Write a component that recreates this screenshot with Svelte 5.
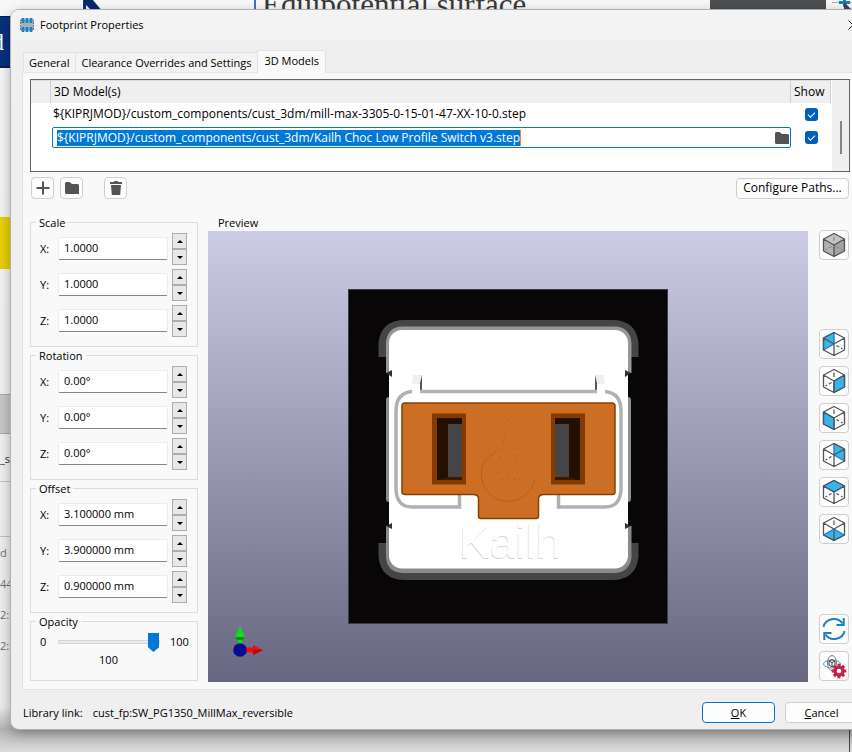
<script>
  const groups = [
    { name: 'Scale', values: ['1.0000', '1.0000', '1.0000'] },
    { name: 'Rotation', values: ['0.00°', '0.00°', '0.00°'] },
    { name: 'Offset', values: ['3.100000 mm', '3.900000 mm', '0.900000 mm'] }
  ];
  const axes = ['X', 'Y', 'Z'];

  const dashTop = 'M15 6.5v4.5';
  const dashLeft = 'M12.5 16.5l-2.5 1.5M8 19l-1.5 1';
  const dashRight = 'M17.5 16.5l2.5 1.5M22 19l1.5 1';
  const views = [
    { label: 'View left', face: '15,3.5 15,15 4.5,21 4.5,9', dashes: dashRight },
    { label: 'View right', face: '15,15 25.5,9 25.5,21 15,26.5', dashes: dashTop + dashLeft },
    { label: 'View front', face: '4.5,9 15,15 15,26.5 4.5,21', dashes: dashTop + dashRight },
    { label: 'View back', face: '15,3.5 25.5,9 25.5,21 15,15', dashes: dashLeft },
    { label: 'View top', face: '15,3.5 25.5,9 15,15 4.5,9', dashes: dashLeft + dashRight },
    { label: 'View bottom', face: '4.5,21 15,15 25.5,21 15,26.5', dashes: dashTop }
  ];
  const teeth = [0, 45, 90, 135, 180, 225, 270, 315];
  let opacity = $state(100);
</script>

{#snippet folder()}
  <svg class="folder" viewBox="0 0 14 12" aria-hidden="true">
    <path d="M0 1.5Q0 0 1.5 0H4.5L7 2H12.5Q14 2 14 3.5V12H1.5Q0 12 0 10.5Z" fill="#545454" />
  </svg>
{/snippet}

{#snippet cube(face, dashes, solid)}
  <svg viewBox="0 0 30 30" width="30" height="30" aria-hidden="true">
    {#if solid}
      <path d="M15 3.5L25.5 9L15 15L4.5 9Z" fill="#c6c6c6" />
      <path d="M4.5 9L15 15V26.5L4.5 21Z" fill="#b2b2b2" />
      <path d="M25.5 9L15 15V26.5L25.5 21Z" fill="#a2a2a2" />
    {:else}
      <polygon points={face} fill="#39b4ea" />
      <polygon points={face} fill="none" stroke="#1a81c4" stroke-width="1.4" stroke-linejoin="round" />
    {/if}
    <path d={dashes} fill="none" stroke={solid ? '#8c8c8c' : '#545454'} stroke-width="1.2" />
    <path d="M15 3.5L25.5 9V21L15 26.5L4.5 21V9ZM4.5 9L15 15L25.5 9M15 15V26.5" fill="none" stroke="#545454" stroke-width="1.3" stroke-linejoin="round" />
  </svg>
{/snippet}

<div class="screen">
  <div class="backdrop">
    <div class="navy"><span>d</span></div>
    <svg class="fin" viewBox="0 0 24 12"><path d="M0 0H10L20 12H17L3 0V12H0Z" fill="#0b3a86" /><path d="M1 0H9L19 12H1Z" fill="#07286c" /><path d="M3 5L10 12H3Z" fill="#f5f5f5" /></svg>
    <div class="rule"></div>
    <div class="heading">Equipotential surface</div>
    <div class="slate"></div>
    <svg class="cross" viewBox="0 0 20 10"><path d="M0 2.5H20" stroke="#b5b5b5" /><path d="M7 2.5H18M12.500 0V7" stroke="#1a81c4" stroke-width="3" /><path d="M12 2L20 10H12Z" fill="#444" /></svg>
    <div class="yellow"></div>
    <div class="grey"></div>
    <div class="list">
      <span class="dark">_sp</span><span class="blank"></span><span>d</span><span>44</span><span>2:1</span><span>2:2</span>
    </div>
    <div class="edge"></div>
  </div>

  <main class="dialog">
    <header class="titlebar">
      <svg viewBox="0 0 14 14" width="14" height="14" aria-hidden="true">
        <rect x="0.500" y="2" width="13" height="10" fill="#a9b2b8" stroke="#777" stroke-dasharray="2 1" />
        <path d="M3 0V5M7 0V5M11 0V5M3 9V14M7 9V14M11 9V14" stroke="#1a81c4" stroke-width="2.800" />
      </svg>
      <h1>Footprint Properties</h1>
      <button class="close" aria-label="Close"><svg viewBox="0 0 10 10" width="10" height="10"><path d="M.5 .5L9.500 9.500M9.500 .5L.5 9.500" stroke="#222" /></svg></button>
    </header>

    <div class="body">
      <div class="tabs" role="tablist">
        <button role="tab" aria-selected="false">General</button>
        <button role="tab" aria-selected="false">Clearance Overrides and Settings</button>
        <button role="tab" aria-selected="true" class="active">3D Models</button>
      </div>

      <section class="page">
        <div class="grid">
          <table>
            <thead>
              <tr><th class="num"></th><th>3D Model(s)</th><th class="show">Show</th></tr>
            </thead>
            <tbody>
              <tr>
                <td></td>
                <td class="path">{'${KIPRJMOD}/custom_components/cust_3dm/mill-max-3305-0-15-01-47-XX-10-0.step'}</td>
                <td class="tick"><input type="checkbox" checked aria-label="Show mill-max model" /></td>
              </tr>
              <tr>
                <td></td>
                <td class="edit">
                  <div class="editor">
                    <input type="text" aria-label="3D model path" value={'${KIPRJMOD}/custom_components/cust_3dm/Kailh Choc Low Profile Switch v3.step'} />
                    <button aria-label="Browse">{@render folder()}</button>
                  </div>
                </td>
                <td class="tick"><input type="checkbox" checked aria-label="Show Kailh model" /></td>
              </tr>
            </tbody>
          </table>
          <div class="scroll"><i></i></div>
        </div>

        <div class="tools">
          <button class="btn small" aria-label="Add"><svg viewBox="0 0 14 14" width="14" height="14"><path d="M7 0.500V13.500M0.500 7H13.500" stroke="#545454" stroke-width="2" /></svg></button>
          <button class="btn small" aria-label="Browse folder">{@render folder()}</button>
          <button class="btn small trash" aria-label="Delete"><svg viewBox="0 0 12 14" width="12" height="14"><path d="M0 1H3.500L4.500 0H7.500L8.500 1H12V3H0ZM1 4H11L10.200 14H1.800Z" fill="#545454" /></svg></button>
          <button class="btn configure">Configure Paths...</button>
        </div>

        <div class="columns">
          <div class="settings">
            {#each groups as g}
              <fieldset>
                <legend>{g.name}</legend>
                {#each axes as axis, i}
                  <div class="row">
                    <label for="{g.name}-{axis}">{axis}:</label>
                    <input id="{g.name}-{axis}" type="text" value={g.values[i]} />
                    <div class="spin">
                      <button aria-label="Increase {g.name} {axis}"><i class="up"></i></button>
                      <button aria-label="Decrease {g.name} {axis}"><i class="down"></i></button>
                    </div>
                  </div>
                {/each}
              </fieldset>
            {/each}
            <fieldset class="opacity">
              <legend>Opacity</legend>
              <div class="slide">
                <span class="min">0</span>
                <input type="range" min="0" max="100" bind:value={opacity} aria-label="Opacity" />
                <span class="max">100</span>
              </div>
              <output>{opacity}</output>
            </fieldset>
          </div>

          <div class="preview">
            <div class="caption">Preview</div>
            <div class="canvas">
              <svg viewBox="208 231 600 451" preserveAspectRatio="xMidYMid meet" role="img" aria-label="3D preview of the switch">
                <rect x="348.500" y="289.500" width="319" height="334" fill="#080606" stroke="#3c3a48" />
                <path d="M378.500 357V343Q381 320 405 320H612Q636 320 638.500 343V357Z" fill="#454545" />
                <path d="M378.500 543V557Q381 580 405 580H612Q636 580 638.500 557V543Z" fill="#454545" />
                <path d="M386 373V343Q387 327 402 326.500H615Q630 327 631.500 343V373Z" fill="#979797" />
                <path d="M386 526V557Q387 572 402 573H615Q630 572 631.500 557V526Z" fill="#8a8a8a" />
                <rect x="386" y="397" width="245" height="105" rx="3" fill="#8c8c8c" />
                <rect x="389" y="330" width="239" height="238.500" rx="13" fill="#fff" />
                <path d="M386 373L392 370V377ZM631 373L625 370V377ZM386 526L392 523V529ZM631 526L625 523V529Z" fill="#333" />
                <path d="M413 375H422L420 384H412ZM595 375H604L605 384H597Z" fill="#efefef" />
                <path d="M422 375V393H420V383ZM595 375V393H597V383Z" fill="#555" />
                <path d="M420 391.500H597" stroke="#b4b4b4" stroke-width="3.500" />
                <path d="M412 391.500Q396 393 396 411V490Q397 507 412 507H459.500V495M605 391.500Q621 393 621 411V490Q620 507 605 507H558.500V495" fill="none" stroke="#b0b0b0" stroke-width="3.500" />
                <path d="M405 403H612Q615 403 615 406V492Q615 494.500 612 494.500H544Q538.500 494.500 538.500 499V516Q538.500 518.500 536 518.500H481Q478.500 518.500 478.500 516V499Q478.500 494.500 473 494.500H405Q402 494.500 402 492V406Q402 403 405 403Z" fill="#cc6f25" stroke="#8a3e00" stroke-width="1.500" />
                <path d="M432 413.500H466V484.500H432ZM551 413.500H585V484.500H551Z" fill="#853b00" />
                <path d="M437 418H462V480H437ZM555 418H580V480H555Z" fill="#241000" />
                <path d="M448 424H462V477H448ZM555 424H569V477H555Z" fill="#454545" />
                <path d="M448 477H462V480H437ZM555 477H569L580 480H555Z" fill="#3c1900" />
                <g fill="none" stroke="#a65514" stroke-width=".6">
                  <path d="M497 451Q479 460 481.500 478Q486 500 509 501.500Q530 499 535 480" />
                  <path d="M507 421L510 419L513 436M505 433L497 477M514 447L520 482M494 484L509 475L523 485M529 459Q534 461 531 466" stroke-dasharray="2 6" />
                </g>
                <text x="458.500" y="558.500" class="brand" fill="#d4d4d4">Kailh</text>
                <text x="459" y="558" class="brand" fill="#fff">Kailh</text>
                <path d="M238 646V637H235L240 626L245 637H242V646Z" fill="#0de01b" />
                <path d="M235 637H245L243 640H237Z" fill="#07940d" />
                <path d="M246 647.500H253V645L263 650L253 655V652.500H246Z" fill="#f20d0d" />
                <path d="M253 655V650H263Z" fill="#b30909" />
                <circle cx="240" cy="650" r="6.800" fill="#0a0a94" />
              </svg>
            </div>
          </div>

          <div class="views">
            <button class="btn view first" aria-label="Isometric">{@render cube('', dashTop + dashLeft + dashRight, true)}</button>
            {#each views as v}
              <button class="btn view" aria-label={v.label}>{@render cube(v.face, v.dashes, false)}</button>
            {/each}
            <button class="btn view refresh" aria-label="Reload">
              <svg viewBox="0 0 30 30" width="30" height="30"><g fill="none" stroke="#1a81c4" stroke-width="2"><path d="M4.500 13C6 5 18 1.500 23.500 9.500M25.500 17C24 25 12 28.500 6.500 20.500" /><path d="M24.700 4V11H17.500M5.300 26V19H12.500" /></g></svg>
            </button>
            <button class="btn view" aria-label="3D settings">
              <svg viewBox="0 0 30 30" width="30" height="30">
                <g fill="none" stroke="#777" stroke-width="1"><ellipse cx="13" cy="13" rx="8.500" ry="4" stroke="#4aa3dc" /><ellipse cx="13" cy="12" rx="4.500" ry="7.500" /><path d="M10 10L13 8.500L16 10V14L13 16L10 14ZM10 10L13 11.500L16 10M13 11.500V16" stroke="#444" /></g>
                <g transform="translate(20 20)" fill="#c4224a">
                  <circle r="5.500" />
                  {#each teeth as t}<rect x="-1.500" y="-7.300" width="3" height="4" transform="rotate({t})" />{/each}
                  <circle r="2.300" fill="#fff" />
                </g>
              </svg>
            </button>
          </div>
        </div>
      </section>

      <footer>
        <span>Library link:</span>
        <span class="link">cust_fp:SW_PG1350_MillMax_reversible</span>
        <button class="btn ok"><span><u>O</u>K</span></button>
        <button class="btn"><span><u>C</u>ancel</span></button>
      </footer>
    </div>
  </main>
</div>

<style>
  :global(body) { margin: 0; overflow: hidden; }
  .screen { position: relative; isolation: isolate; overflow: hidden; min-height: 100vh; padding: 10px 0 23px 11px; box-sizing: border-box; background: linear-gradient(#f8f8f8, #ededed 94%, #b4b4b4 97%, #dcdcdc); font: 11px/16px "Open Sans", "Noto Sans", sans-serif; color: #000; }
  .screen *, .screen *::after { box-sizing: border-box; }
  button, input { font: inherit; color: inherit; margin: 0; padding: 0; }

  .backdrop { position: absolute; inset: 0; overflow: hidden; }
  .backdrop > * { position: absolute; }
  .navy { left: 0; top: 16px; width: 14px; height: 52px; background: #06327e; border: solid #04205c; border-width: 1px 0 2px; color: #fff; font: 24px/50px "Liberation Serif", serif; }
  .navy span { margin-left: -8px; }
  .fin { left: 83px; top: 0; width: 24px; height: 12px; }
  .rule { left: 254px; top: 0; width: 2px; height: 12px; background: #4472b4; }
  .heading { left: 262px; top: -13px; font: 31px/36px "Liberation Serif", serif; color: #3a3a3a; white-space: nowrap; }
  .slate { left: 710px; top: 0; width: 116px; height: 12px; background: #4b4f52; }
  .cross { left: 832px; top: 0; width: 20px; height: 10px; }
  .yellow { left: 0; top: 217px; width: 12px; height: 52px; background: #e8d200; }
  .grey { left: 0; top: 394px; width: 12px; height: 40px; background: #c8c8c8; border: solid #a5a5a5; border-width: 1px 0; }
  .list { left: 0; top: 442px; width: 12px; color: #707070; }
  .list span { display: block; height: 31px; line-height: 31px; }
  .list .dark { height: 40px; line-height: 34px; border-bottom: 1px solid #c4c4c4; color: #333; }
  .list .blank { height: 55px; border-bottom: 1px solid #c4c4c4; }
  .edge { right: 2px; bottom: 0; width: 1px; height: 24px; background: #444; }

  .dialog { position: relative; margin-right: -17px; border-radius: 8px; background: #efefef; box-shadow: 0 0 0 1px #b0b0b0, 0 4px 14px rgba(0, 0, 0, .35); overflow: clip; }
  .titlebar { display: flex; align-items: center; height: 30px; padding: 0 11px 0 9px; background: #f3f3f3; }
  h1 { flex: 1; margin: 0 0 0 6px; font-size: 11px; font-weight: 400; }
  .close { border: 0; background: none; display: flex; width: 10px; }
  .body { padding: 10px 11px 0; }

  .tabs { display: flex; align-items: flex-end; height: 22px; padding-left: 1px; }
  .tabs button { height: 20px; padding: 0 6px 0 5px; border: 1px solid #e3e3e3; border-bottom: 0; border-right: 0; background: #f3f3f3; white-space: nowrap; }
  .tabs .active { height: 23px; padding: 0 6px 2px; margin-bottom: -1px; border-right: 1px solid #e3e3e3; background: #f9f9f9; z-index: 1; }
  .page { border: 1px solid #e3e3e3; background: #f9f9f9; padding: 6px 7px 7px; }

  .grid { display: flex; height: 93px; border: 1px solid #646464; background: #fff; font-size: 12px; }
  table { flex: 1; align-self: flex-start; border-collapse: separate; border-spacing: 0; table-layout: fixed; width: 100%; }
  th { height: 23px; padding: 0 3px; border-right: 1px solid #cfcfcf; border-top: 1px solid #dcdcdc; background: #efefef; font-weight: 400; text-align: left; }
  th.num { width: 20px; }
  th.show { width: 40px; }
  td { height: 23px; padding: 0; }
  td.path { padding: 0 2px 2px; white-space: nowrap; }
  td.edit { padding: 0 0 0 1px; }
  td.tick { text-align: center; line-height: 0; }
  .editor { display: flex; align-items: center; justify-content: space-between; height: 21px; padding: 0 1px 0 4px; border: 1px solid #0078d7; border-radius: 2px; background: #fff; }
  .editor input { field-sizing: content; height: 16px; border: 0; border-right: 1px solid #ff7f27; background: #0078d7; color: #fff; min-width: 0; }
  .editor button { display: flex; border: 0; background: none; }
  .folder { width: 14px; height: 12px; display: block; }
  input[type='checkbox'] { appearance: none; position: relative; width: 13px; height: 13px; border-radius: 3px; background: #005fb8; }
  input[type='checkbox']::after { content: ''; position: absolute; left: 3px; top: 4px; width: 7px; height: 4px; border: solid #fff; border-width: 0 0 1px 1px; transform: rotate(-45deg); }
  .scroll { width: 17px; margin-left: 1px; padding: 41px 0 0 8px; background: #efefef; }
  .scroll i { display: block; width: 2px; height: 33px; background: #858585; }

  .btn { display: flex; align-items: center; justify-content: center; border: 1px solid #cfcfcf; border-radius: 4px; background: #fdfdfd; }
  .tools { display: flex; align-items: center; gap: 6px; height: 22px; margin: 5px 1px 15px; }
  .small { width: 23px; height: 22px; }
  .trash { margin-left: 15px; }
  .configure { margin-left: auto; width: 113px; height: 21px; white-space: nowrap; font-size: 12px; }

  .columns { display: flex; }
  .settings { width: 168px; flex: none; }
  fieldset { display: flex; flex-direction: column; gap: 4px; margin: 0; min-width: 0; padding: 2px 10px 9px 9px; border: 1px solid #dcdcdc; }
  legend { padding: 0 3px; margin-left: -4px; line-height: 17px; height: 17px; }
  .row { display: flex; align-items: center; height: 32px; }
  .row label { width: 18px; }
  .row input { flex: 1; min-width: 0; height: 23px; margin-bottom: 2px; padding: 0 5px 2px; border: 1px solid #ececec; border-bottom-color: #868686; border-radius: 2px; background: #fff; }
  .spin { display: flex; flex-direction: column; width: 15px; height: 32px; margin-left: 4px; }
  .spin button { display: flex; align-items: center; justify-content: center; height: 16px; border: 1px solid #adadad; background: #e8e8e8; }
  .up, .down { border: 3px solid transparent; }
  .up { border-top: 0; border-bottom-color: #000; }
  .down { border-bottom: 0; border-top-color: #000; }
  .opacity { gap: 0; height: 68px; padding: 2px 8px 0 9px; }
  .slide { display: flex; align-items: center; height: 20px; }
  .slide .min { width: 18px; }
  .slide .max { width: 19px; }
  .slide input { appearance: none; flex: 1; min-width: 0; height: 19px; margin-right: 10px; background: none; }
  .slide input::-webkit-slider-runnable-track { height: 4px; background: #e7eaea; border: 1px solid #d6d6d6; }
  .slide input::-webkit-slider-thumb { appearance: none; width: 11px; height: 19px; margin-top: -8px; background: #0078d7; clip-path: polygon(0 0, 100% 0, 100% 75%, 50% 100%, 0 75%); }
  output { text-align: center; margin-right: 12px; line-height: 16px; }

  .preview { flex: 1; min-width: 0; display: flex; flex-direction: column; margin: 0 11px 0 10px; }
  .caption { padding-left: 10px; line-height: 17px; }
  .canvas { flex: 1; min-height: 451px; background: linear-gradient(#cccce6, #666680); display: flex; }
  .canvas svg { width: 100%; display: block; }
  .brand { font: 46px "Liberation Sans", sans-serif; }
  .views { display: flex; flex-direction: column; gap: 7px; width: 30px; margin: 16px 1px 1px 0; }
  .view { width: 30px; height: 30px; flex: none; }
  .view svg { flex: none; }
  .first { margin-bottom: 62px; }
  .refresh { margin-top: auto; }

  footer { display: flex; align-items: center; gap: 10px; height: 39px; padding: 6px 0 0 1px; }
  .link { flex: 1; }
  footer .btn { width: 73px; height: 21px; }
  footer .ok { border-color: #0078d7; }
</style>
